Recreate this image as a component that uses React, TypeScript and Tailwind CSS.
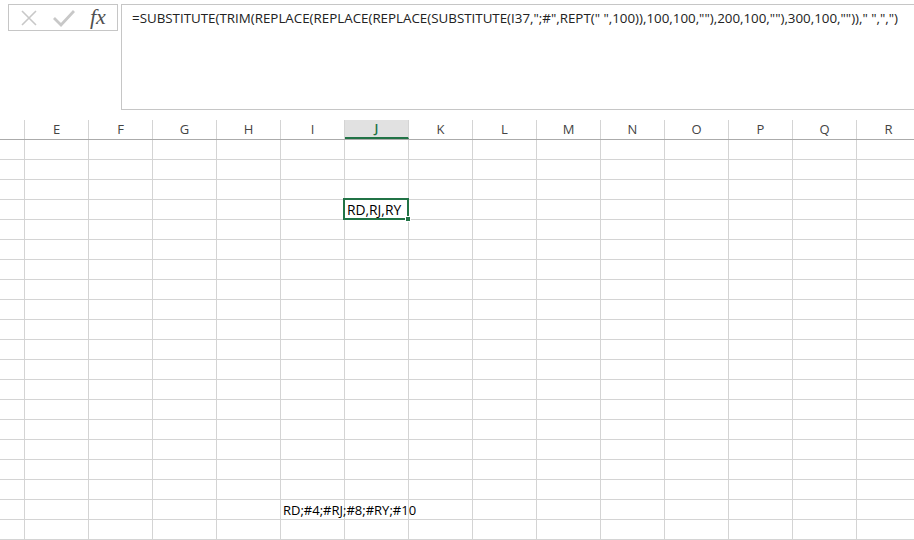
import React from "react";

const COLS = ["E", "F", "G", "H", "I", "J", "K", "L", "M", "N", "O", "P", "Q", "R"];
const ROWS = 20;

const FORMULA =
  '=SUBSTITUTE(TRIM(REPLACE(REPLACE(REPLACE(SUBSTITUTE(I37,";#",REPT(" ",100)),100,100,""),200,100,""),300,100,"")),"  ",",")'.replace(
    '"  "',
    '" "'
  );

const cellFont = { fontFamily: '"Open Sans", "Liberation Sans", sans-serif' };

function FormulaBar() {
  return (
    <div className="h-[120px] bg-white flex items-start pt-[4px] pl-[8px] gap-[3px]">
      {/* cancel / enter / fx */}
      <div className="w-[110px] h-[27px] shrink-0 border border-[#c6c6c6] flex items-center pl-[11px] gap-[15px]">
        <svg width="18" height="18" viewBox="0 0 18 18">
          <path d="M2 2 L16 16 M16 2 L2 16" stroke="#c8c8c8" strokeWidth="1.6" fill="none" />
        </svg>
        <svg width="22" height="18" viewBox="0 0 22 18">
          <path d="M1 9 L8 16 L21 2" stroke="#c8c8c8" strokeWidth="2.8" fill="none" />
        </svg>
        <span
          className="text-[22px] italic text-[#505050] leading-none pb-[2px]"
          style={{ fontFamily: '"Liberation Serif", "DejaVu Serif", serif' }}
        >
          fx
        </span>
      </div>
      {/* formula box */}
      <div className="flex-1 h-[106px] border border-r-0 border-[#c6c6c6] pl-[10px] pt-[3px] overflow-hidden">
        <div
          className="text-[13.35px] text-[#222] whitespace-pre"
          style={{ fontFamily: '"Open Sans", "Liberation Sans", sans-serif' }}
        >
          {FORMULA}
        </div>
      </div>
    </div>
  );
}

function Header() {
  return (
    <div className="flex h-[20px] border-b border-[#ababab]" style={cellFont}>
      <div className="w-[25px] shrink-0 border-r border-[#d4d4d4]" />
      {COLS.map((c) =>
        c === "J" ? (
          <div
            key={c}
            className="w-[64px] shrink-0 border-r border-[#d4d4d4] border-b-2 border-b-[#217346] bg-[#e1e1e1] flex items-center justify-center text-[13px] font-semibold text-[#217346]"
          >
            {c}
          </div>
        ) : (
          <div
            key={c}
            className="w-[64px] shrink-0 border-r border-[#d4d4d4] flex items-center justify-center text-[13px] text-[#444]"
          >
            {c}
          </div>
        )
      )}
    </div>
  );
}

function Row({ index }: { index: number }) {
  return (
    <div className="flex h-[20px] border-b border-[#d4d4d4]" style={cellFont}>
      <div className="w-[25px] shrink-0 border-r border-[#d4d4d4]" />
      {COLS.map((c) => {
        const selected = index === 3 && c === "J";
        const note = index === 18 && c === "I";
        return (
          <div
            key={c}
            className="w-[64px] shrink-0 border-r border-[#d4d4d4] relative flex items-end pl-[2px] text-black leading-[18px] whitespace-nowrap"
          >
            {note && <span className="text-[13px]">RD;#4;#RJ;#8;#RY;#10</span>}
            {selected && (
              <>
                <span className="text-[13.8px]">RD,RJ,RY</span>
                <div className="absolute left-[-2px] top-[-2px] w-[66px] h-[22px] border-2 border-[#217346] z-10">
                  <div className="absolute right-[-4px] bottom-[-4px] w-[6px] h-[6px] bg-[#217346] border border-white" />
                </div>
              </>
            )}
          </div>
        );
      })}
    </div>
  );
}

export default function App() {
  return (
    <div className="w-[914px] h-[540px] overflow-hidden bg-white">
      <FormulaBar />
      <Header />
      {Array.from({ length: ROWS }).map((_, i) => (
        <Row key={i} index={i} />
      ))}
    </div>
  );
}
